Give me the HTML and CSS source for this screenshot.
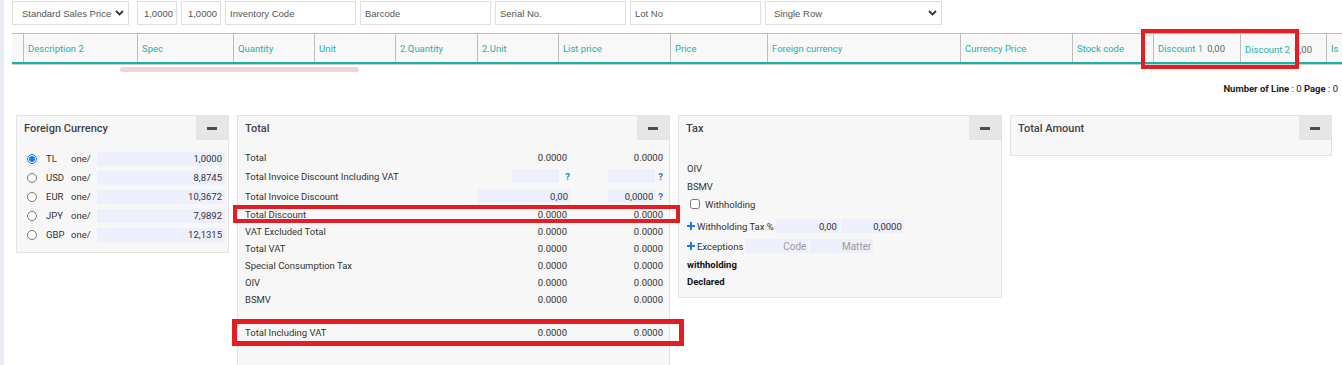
FILE: index.html
```html
<!DOCTYPE html>
<html lang="en">
<head>
    <meta charset="UTF-8">
    <meta name="viewport" content="width=device-width, initial-scale=1.0">
    <title>Invoice Totals</title>
    <link rel="stylesheet" href="styles.css">
</head>
<body>
<div class="page">
    <div class="side-strip"></div>
    <div class="main">

        <!-- Line entry toolbar -->
        <div class="toolbar">
            <div class="select sel-price">
                <span>Standard Sales Price</span>
                <svg width="9" height="6" viewBox="0 0 9 6"><path d="M1 1l3.5 3.5L8 1" fill="none" stroke="#333" stroke-width="1.8"/></svg>
            </div>
            <input class="field num" type="text" value="1,0000">
            <input class="field num" type="text" value="1,0000">
            <input class="field text" type="text" placeholder="Inventory Code">
            <input class="field text" type="text" placeholder="Barcode">
            <input class="field text" type="text" placeholder="Serial No.">
            <input class="field text" type="text" placeholder="Lot No">
            <div class="select sel-row">
                <span>Single Row</span>
                <svg width="9" height="6" viewBox="0 0 9 6"><path d="M1 1l3.5 3.5L8 1" fill="none" stroke="#333" stroke-width="1.8"/></svg>
            </div>
        </div>

        <!-- Grid column headers -->
        <div class="grid-head">
            <div class="col"></div>
            <div class="col">Description 2</div>
            <div class="col">Spec</div>
            <div class="col">Quantity</div>
            <div class="col">Unit</div>
            <div class="col">2.Quantity</div>
            <div class="col">2.Unit</div>
            <div class="col">List price</div>
            <div class="col">Price</div>
            <div class="col">Foreign currency</div>
            <div class="col">Currency Price</div>
            <div class="col">Stock code</div>
            <div class="col marked">Discount 1<span class="col-val">0,00</span></div>
            <div class="col low">Discount 2<span class="col-val">0,00</span></div>
            <div class="col">Is</div>
        </div>
        <div class="scroll-thumb"></div>

        <div class="line-info"><b>Number of Line</b> : 0 <b>Page</b> : 0</div>

        <div class="panels">

            <!-- Foreign currency -->
            <div class="panel panel-fx">
                <div class="panel-head">
                    <span class="panel-title">Foreign Currency</span>
                    <button class="collapse"></button>
                </div>
                <div class="fx-body">
                    <label class="fx-row"><input type="radio" name="cur" checked><span class="fx-code">TL</span><span class="fx-per">one/</span><span class="fx-rate">1,0000</span></label>
                    <label class="fx-row"><input type="radio" name="cur"><span class="fx-code">USD</span><span class="fx-per">one/</span><span class="fx-rate">8,8745</span></label>
                    <label class="fx-row"><input type="radio" name="cur"><span class="fx-code">EUR</span><span class="fx-per">one/</span><span class="fx-rate">10,3672</span></label>
                    <label class="fx-row"><input type="radio" name="cur"><span class="fx-code">JPY</span><span class="fx-per">one/</span><span class="fx-rate">7,9892</span></label>
                    <label class="fx-row"><input type="radio" name="cur"><span class="fx-code">GBP</span><span class="fx-per">one/</span><span class="fx-rate">12,1315</span></label>
                </div>
            </div>

            <!-- Totals -->
            <div class="panel panel-sum">
                <div class="panel-head">
                    <span class="panel-title">Total</span>
                    <button class="collapse"></button>
                </div>
                <div class="sum-body">
                    <div class="sum-row">
                        <span class="sum-label">Total</span>
                        <span class="sum-cell c1"><span class="val">0.0000</span></span>
                        <span class="sum-cell c2"><span class="val">0.0000</span></span>
                    </div>
                    <div class="sum-row tall">
                        <span class="sum-label">Total Invoice Discount Including VAT</span>
                        <span class="sum-cell c1"><input class="box" type="text"><span class="q q-wide">?</span></span>
                        <span class="sum-cell c2"><input class="box" type="text"><span class="q">?</span></span>
                    </div>
                    <div class="sum-row tall">
                        <span class="sum-label">Total Invoice Discount</span>
                        <span class="sum-cell c1"><input class="box box-full" type="text" value="0,00"></span>
                        <span class="sum-cell c2"><input class="box" type="text" value="0,0000"><span class="q">?</span></span>
                    </div>
                    <div class="sum-row marked mark-disc">
                        <span class="sum-label">Total Discount</span>
                        <span class="sum-cell c1"><span class="val">0.0000</span></span>
                        <span class="sum-cell c2"><span class="val">0.0000</span></span>
                    </div>
                    <div class="sum-row">
                        <span class="sum-label">VAT Excluded Total</span>
                        <span class="sum-cell c1"><span class="val">0.0000</span></span>
                        <span class="sum-cell c2"><span class="val">0.0000</span></span>
                    </div>
                    <div class="sum-row">
                        <span class="sum-label">Total VAT</span>
                        <span class="sum-cell c1"><span class="val">0.0000</span></span>
                        <span class="sum-cell c2"><span class="val">0.0000</span></span>
                    </div>
                    <div class="sum-row">
                        <span class="sum-label">Special Consumption Tax</span>
                        <span class="sum-cell c1"><span class="val">0.0000</span></span>
                        <span class="sum-cell c2"><span class="val">0.0000</span></span>
                    </div>
                    <div class="sum-row">
                        <span class="sum-label">OIV</span>
                        <span class="sum-cell c1"><span class="val">0.0000</span></span>
                        <span class="sum-cell c2"><span class="val">0.0000</span></span>
                    </div>
                    <div class="sum-row">
                        <span class="sum-label">BSMV</span>
                        <span class="sum-cell c1"><span class="val">0.0000</span></span>
                        <span class="sum-cell c2"><span class="val">0.0000</span></span>
                    </div>
                    <div class="sum-row spaced marked mark-total">
                        <span class="sum-label">Total Including VAT</span>
                        <span class="sum-cell c1"><span class="val">0.0000</span></span>
                        <span class="sum-cell c2"><span class="val">0.0000</span></span>
                    </div>
                </div>
            </div>

            <!-- Tax -->
            <div class="panel panel-tax">
                <div class="panel-head">
                    <span class="panel-title">Tax</span>
                    <button class="collapse"></button>
                </div>
                <div class="tax-body">
                    <div class="tax-row">OIV</div>
                    <div class="tax-row">BSMV</div>
                    <label class="tax-row check-row"><input type="checkbox">Withholding</label>
                    <div class="tax-row input-row first-input">
                        <svg class="plus" width="8" height="8" viewBox="0 0 8 8"><path d="M4 0v8M0 4h8" stroke="#1b7ee4" stroke-width="2"/></svg>
                        <span class="tax-label">Withholding Tax %</span>
                        <input class="box tax-box" type="text" value="0,00">
                        <input class="box tax-box" type="text" value="0,0000">
                    </div>
                    <div class="tax-row input-row">
                        <svg class="plus" width="8" height="8" viewBox="0 0 8 8"><path d="M4 0v8M0 4h8" stroke="#1b7ee4" stroke-width="2"/></svg>
                        <span class="tax-label">Exceptions</span>
                        <input class="box tax-box ph" type="text" placeholder="Code">
                        <input class="box tax-box ph" type="text" placeholder="Matter">
                    </div>
                    <div class="tax-row strong">withholding</div>
                    <div class="tax-row strong">Declared</div>
                </div>
            </div>

            <!-- Total amount -->
            <div class="panel panel-amount">
                <div class="panel-head">
                    <span class="panel-title">Total Amount</span>
                    <button class="collapse"></button>
                </div>
                <div class="amount-body"></div>
            </div>

        </div>
    </div>
</div>
</body>
</html>
```

FILE: styles.css
```css
body {
    margin: 0;
    font-family: Roboto, "Liberation Sans", Arial, sans-serif;
    font-size: 9.5px;
    color: #333;
    background-color: #fff;
}
.page {
    display: flex;
    min-height: 100vh;
}
.side-strip {
    width: 4px;
    flex: none;
    background-color: #e8ebf1;
}
.main {
    flex: 1;
    min-width: 0;
    padding-left: 8px;
    overflow: hidden;
}

/* toolbar */
.toolbar {
    display: flex;
    gap: 4px;
    margin-top: 1px;
    height: 24px;
}
.field, .select {
    box-sizing: border-box;
    height: 24px;
    margin: 0;
    border: 1px solid #dedede;
    border-radius: 0;
    background-color: #fff;
    font-family: "Liberation Sans", Arial, sans-serif;
    font-size: 9.5px;
    color: #555;
    outline: none;
}
.field {
    padding: 0 4px;
}
.field::placeholder {
    color: #555;
}
.field.num {
    width: 40px;
    text-align: right;
    padding-right: 3px;
}
.field.text {
    width: 131px;
}
.select {
    display: flex;
    align-items: center;
    justify-content: space-between;
    padding: 0 4px 0 9px;
}
.sel-price {
    width: 117px;
    margin-right: 4px;
}
.sel-row {
    width: 177px;
    padding-left: 8px;
}

/* grid header */
.grid-head {
    display: grid;
    grid-template-columns: 11px 114px 96px 81px 81px 82px 81px 112px 97px 193px 112px 81px 87px 86px 60px;
    margin-top: 8px;
    height: 31px;
    box-sizing: border-box;
    border-top: 1px solid #bfbfbf;
    border-bottom: 2px solid #17b3a6;
    background-color: #f8f8f8;
    box-shadow: 0 1px 0 #cfcfcf;
}
.col {
    display: flex;
    align-items: center;
    padding-left: 4px;
    border-left: 1px solid #bdbdbd;
    color: #1fb1a6;
    white-space: nowrap;
}
.col:first-child {
    border-left: none;
}
.col.low {
    padding-top: 3px;
}
.col-val {
    margin-left: 4px;
    color: #666;
}
.scroll-thumb {
    width: 239px;
    height: 5px;
    margin: 3px 0 0 108px;
    border-radius: 3px;
    background-color: #f3d4d4;
}
.line-info {
    margin-top: 10px;
    height: 14px;
    line-height: 14px;
    padding-right: 4px;
    text-align: right;
    color: #222;
}

/* annotation boxes */
.marked {
    position: relative;
}
.marked::after {
    content: "";
    position: absolute;
    box-sizing: border-box;
    border: 4px solid #e41d25;
    pointer-events: none;
    z-index: 2;
}
.col.marked::after {
    left: -13px;
    top: -5px;
    width: 158px;
    height: 40px;
}
.mark-disc::after {
    left: -12px;
    right: -17px;
    top: -1px;
    bottom: 0;
}
.mark-total::after {
    left: -13px;
    right: -21px;
    top: -5px;
    bottom: -5px;
    border-width: 5px;
}

/* panels */
.panels {
    display: flex;
    align-items: flex-start;
    gap: 8px;
    margin-top: 19px;
    padding-left: 4px;
}
.panel {
    box-sizing: border-box;
    background-color: #f7f7f7;
    border: 1px solid #e3e3e3;
}
.panel-fx { width: 213px; }
.panel-sum { width: 433px; }
.panel-tax { width: 324px; }
.panel-amount { width: 322px; }
.panel-head {
    display: flex;
    justify-content: space-between;
    align-items: center;
    height: 24px;
}
.panel-title {
    padding-left: 7px;
    font-size: 11px;
    font-weight: 500;
    color: #444;
}
.collapse {
    display: flex;
    align-items: center;
    justify-content: center;
    width: 32px;
    height: 24px;
    padding: 0;
    border: none;
    background-color: #e6e6e6;
}
.collapse::before {
    content: "";
    width: 10px;
    height: 3px;
    background-color: #4d4d4d;
}
.box {
    box-sizing: border-box;
    height: 14px;
    margin: 0;
    padding: 0 2px;
    border: none;
    background-color: #eeeffc;
    font-family: Roboto, "Liberation Sans", Arial, sans-serif;
    font-size: 9.5px;
    color: #333;
    text-align: right;
    outline: none;
}

/* foreign currency */
.fx-body {
    padding: 9px 3px 8px 10px;
}
.fx-row {
    display: flex;
    align-items: center;
    height: 19px;
}
.fx-row input {
    width: 10px;
    height: 10px;
    margin: 0;
    accent-color: #1e76e8;
}
.fx-code {
    width: 25px;
    margin-left: 9px;
}
.fx-per {
    width: 26px;
}
.fx-rate {
    width: 128px;
    height: 14px;
    line-height: 14px;
    box-sizing: border-box;
    padding-right: 3px;
    text-align: right;
    background-color: #eeeffc;
}

/* totals */
.sum-body {
    padding: 9px 6px 40px 7px;
}
.sum-row {
    display: flex;
    align-items: center;
    height: 17px;
}
.sum-row.tall {
    height: 20px;
}
.sum-row.spaced {
    margin-top: 16px;
}
.sum-label {
    flex: 1;
}
.sum-cell {
    display: flex;
    align-items: center;
    justify-content: flex-end;
}
.c1 {
    width: 92px;
}
.c2 {
    width: 90px;
    margin-left: 3px;
}
.c1 .val {
    padding-right: 3px;
}
.sum-cell .box {
    width: 47px;
}
.sum-cell .box-full {
    width: 92px;
}
.q {
    margin-left: 3px;
    font-weight: 700;
    color: #1b7ee4;
}
.q-wide {
    margin-left: 6px;
}

/* tax */
.tax-body {
    padding: 19px 8px 7px 8px;
}
.tax-row {
    display: flex;
    align-items: center;
    height: 18px;
}
.tax-row.input-row {
    height: 20px;
}
.tax-row.first-input {
    margin-top: 3px;
}
.check-row input {
    width: 10px;
    height: 10px;
    margin: 0 5px 0 3px;
}
.plus {
    margin-right: 2px;
}
.tax-label {
    margin-right: 2px;
}
.tax-box {
    width: 63px;
    margin-right: 2px;
}
.tax-box.ph {
    font-size: 10px;
}
.tax-box.ph::placeholder {
    color: #9b9b9b;
}
.tax-row.strong {
    height: 17px;
    font-weight: 700;
    color: #111;
}
.amount-body {
    height: 15px;
}
```
